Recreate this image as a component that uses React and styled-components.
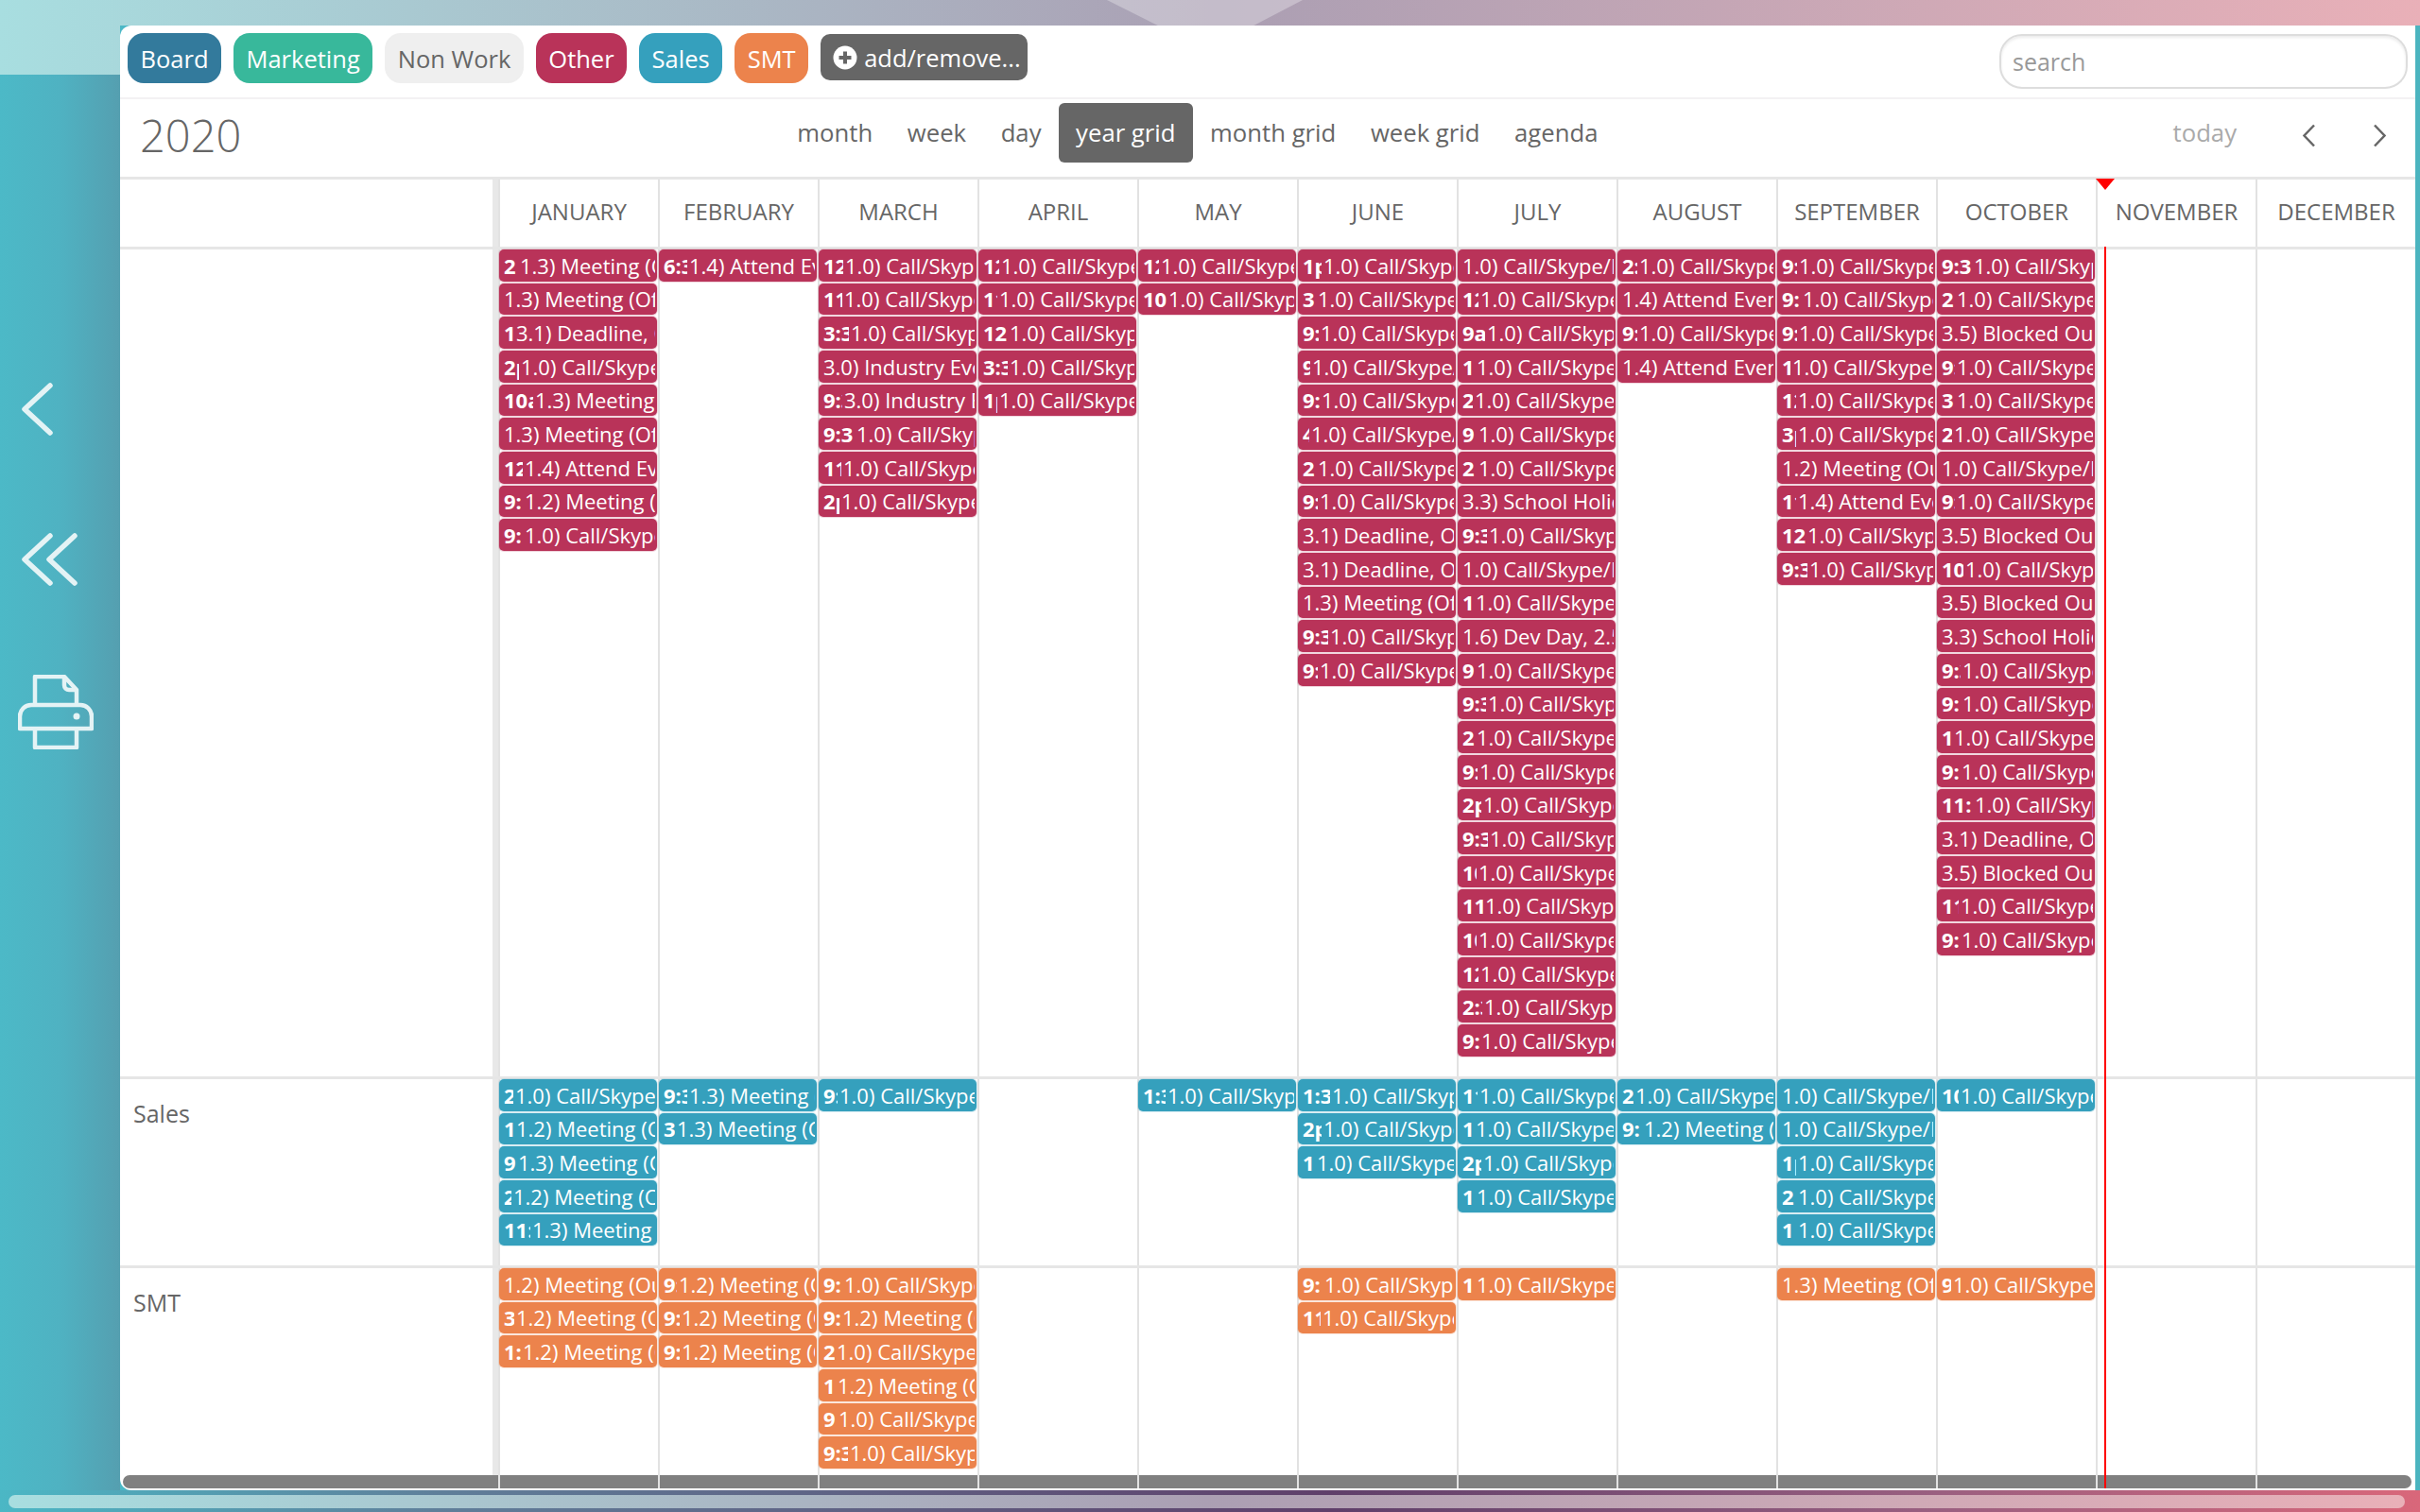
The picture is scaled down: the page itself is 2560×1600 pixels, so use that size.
import React from "react";
import styled, { createGlobalStyle } from "styled-components";

const C = "1.0) Call/Skype/Internal";
const M2 = "1.2) Meeting (Outside)";
const M3 = "1.3) Meeting (Office)";
const A = "1.4) Attend Event";
const D = "3.1) Deadline, Other";
const I = "3.0) Industry Event";
const B = "3.5) Blocked Out";
const S = "3.3) School Holiday";
const V = "1.6) Dev Day, 2.5";

const MONTHS = [
  "January", "February", "March", "April", "May", "June", "July",
  "August", "September", "October", "November", "December",
];

const PILLS = [
  ["Board", "#337a9c", "#fff"],
  ["Marketing", "#38b89b", "#fff"],
  ["Non Work", "#efefef", "#666"],
  ["Other", "#b93359", "#fff"],
  ["Sales", "#35a0bd", "#fff"],
  ["SMT", "#ec834c", "#fff"],
];

const TABS = ["month", "week", "day", "year grid", "month grid", "week grid", "agenda"];

// each event: [time as it shows once clipped, clip width, title]
const OTHER = [
  [
    ["2", 17, M3], ["", 0, M3], ["11", 13, D], ["2pm", 18, C], ["10am", 33, M3],
    ["", 0, M3], ["12:00", 22, A], ["9:", 22, M2], ["9:", 22, C],
  ],
  [["6:30", 27, A]],
  [
    ["12:00", 23, C], ["11:", 22, C], ["3:30", 29, C], ["", 0, I], ["9:30", 22, I],
    ["9:3", 35, C], ["11", 21, C], ["2pm", 19, C],
  ],
  [["12:00", 19, C], ["11:", 17, C], ["12", 28, C], ["3:30", 28, C], ["1pm", 17, C]],
  [["12:00", 19, C], ["10", 27, C]],
  [
    ["1pm", 22, C], ["3", 16, C], ["9:30", 19, C], ["9", 10, C], ["9:", 20, C], ["4", 9, C],
    ["2", 16, C], ["9:30", 18, C], ["", 0, D], ["", 0, D], ["", 0, M3], ["9:30", 29, C], ["9:30", 18, C],
  ],
  [
    ["", 0, C], ["12:00", 19, C], ["9a", 26, C], ["1", 15, C], ["2pm", 13, C], ["9", 17, C],
    ["2", 17, C], ["", 0, S], ["9:30", 28, C], ["", 0, C], ["11", 14, C], ["", 0, V],
    ["9", 15, C], ["9:30", 27, C], ["2", 15, C], ["9:", 18, C], ["2pm", 22, C], ["9:3", 29, C],
    ["10:", 17, C], ["11", 24, C], ["10:", 17, C], ["12:00", 19, C], ["2:30", 23, C], ["9:", 20, C],
  ],
  [["2:", 18, C], ["", 0, A], ["9:30", 18, C], ["", 0, A]],
  [
    ["9:30", 18, C], ["9:", 22, C], ["9:30", 18, C], ["1", 11, C], ["12:00", 17, C],
    ["3pm", 17, C], ["", 0, M2], ["11:", 17, A], ["12", 27, C], ["9:30", 29, C],
  ],
  [
    ["9:3", 34, C], ["2", 16, C], ["", 0, B], ["9:30", 16, C], ["3", 16, C], ["2", 13, C], ["", 0, C],
    ["9:30", 16, C], ["", 0, B], ["10", 25, C], ["", 0, B], ["", 0, S], ["9:30", 22, C], ["9:", 22, C],
    ["1", 13, C], ["9:", 21, C], ["11:", 35, C], ["", 0, D], ["", 0, B], ["11:", 20, C], ["9:", 21, C],
  ],
  [],
  [],
];

const SALES = [
  [["2pm", 12, C], ["10:", 13, M2], ["9:30", 15, M3], ["2", 10, M2], ["11:", 30, M3]],
  [["9:30", 27, M3], ["3pm", 14, M3]],
  [["9:30", 17, C]],
  [],
  [["1:30", 26, C]],
  [["1:3", 31, C], ["2pm", 22, C], ["1", 15, C]],
  [["11", 18, C], ["1", 14, C], ["2pm", 22, C], ["1", 15, C]],
  [["2", 14, C], ["9:", 23, M2]],
  [["", 0, C], ["", 0, C], ["1pm", 17, C], ["2", 17, C], ["1", 17, C]],
  [["10:", 20, C]],
  [],
  [],
];

const SMT = [
  [["", 0, M2], ["3", 13, M2], ["1:", 20, M2]],
  [["9:30", 16, M2], ["9:", 19, M2], ["9:", 19, M2]],
  [["9:", 22, C], ["9:", 20, M2], ["2", 14, C], ["1", 15, M2], ["9", 16, C], ["9:30", 28, C]],
  [],
  [],
  [["9:", 23, C], ["11:", 21, C]],
  [["11:", 15, C]],
  [],
  [["", 0, M3]],
  [["9:30", 12, C]],
  [],
  [],
];

const ROWS = [
  { name: "", height: 878, color: "#b93359", days: OTHER },
  { name: "Sales", height: 200, color: "#35a0bd", days: SALES },
  { name: "SMT", height: 236, color: "#ec834c", days: SMT },
];

const App = () => {
  return (
    <Page>
      <GlobalStyle />
      <TopBar>
        <TopShine />
      </TopBar>
      <Main>
        <Rail>
          <RailCap />
          <RailIcons>
            <RailButton>
              <svg width="34" height="56" viewBox="0 0 34 56" fill="none" stroke="#e4f3f5" strokeWidth="5.5" strokeLinecap="round" strokeLinejoin="round">
                <path d="M30 3 3 28l27 25" />
              </svg>
            </RailButton>
            <RailButton>
              <svg width="60" height="56" viewBox="0 0 60 56" fill="none" stroke="#e4f3f5" strokeWidth="5.5" strokeLinecap="round" strokeLinejoin="round">
                <path d="M30 3 3 28l27 25" />
                <path d="M56 3 29 28l27 25" />
              </svg>
            </RailButton>
            <RailButton $shift={-4} $drop={3}>
              <svg width="80" height="79" viewBox="0 0 80 79" fill="none" stroke="#e4f3f5" strokeWidth="4.5" strokeLinejoin="round">
                <path d="M18 30V2h31l13 14v14" />
                <path d="M49 2v9a5 5 0 0 0 5 5h8" />
                <path d="M2 57V44a12 12 0 0 1 12-12h52a12 12 0 0 1 12 12v13z" />
                <path d="M18 57v20h44V57" />
                <circle cx="62" cy="44" r="3.5" fill="#e4f3f5" stroke="none" />
              </svg>
            </RailButton>
          </RailIcons>
        </Rail>
        <Panel>
          <Toolbar>
            {PILLS.map(([label, bg, fg]) => (
              <Pill key={label} $bg={bg} $fg={fg}>{label}</Pill>
            ))}
            <AddButton>
              <svg width="26" height="26" viewBox="0 0 26 26">
                <circle cx="13" cy="13" r="12.5" fill="#fff" />
                <path d="M13 6.5v13M6.5 13h13" stroke="#666" strokeWidth="4" />
              </svg>
              add/remove...
            </AddButton>
            <Search placeholder="search" />
          </Toolbar>
          <NavBar>
            <Title>2020</Title>
            <Tabs>
              {TABS.map((tab) => (
                <Tab key={tab} $active={tab === "year grid"}>{tab}</Tab>
              ))}
            </Tabs>
            <NavRight>
              <Today>today</Today>
              <Arrow width="15" height="25" viewBox="0 0 15 25">
                <path d="M13 1.5 2.5 12.5 13 23.5" />
              </Arrow>
              <Arrow width="15" height="25" viewBox="0 0 15 25">
                <path d="M2 1.5 12.5 12.5 2 23.5" />
              </Arrow>
            </NavRight>
          </NavBar>
          <HeadRow>
            <RowLabel />
            {MONTHS.map((month) => (
              <HeadCell key={month}>{month}</HeadCell>
            ))}
          </HeadRow>
          {ROWS.map((row) => (
            <GridRow key={row.color} $height={row.height}>
              <RowLabel>{row.name}</RowLabel>
              {row.days.map((events, i) => (
                <DayCell key={i}>
                  {events.map(([time, clip, title], j) => (
                    <Event key={j} $color={row.color}>
                      {time && <EventTime $clip={clip}>{time}</EventTime>}
                      <EventTitle>{title}</EventTitle>
                    </Event>
                  ))}
                </DayCell>
              ))}
            </GridRow>
          ))}
          <InnerScroll />
          <NowArrow />
          <NowLine />
        </Panel>
        <RightEdge />
      </Main>
      <PageScroll>
        <PageThumb />
      </PageScroll>
    </Page>
  );
};

const GlobalStyle = createGlobalStyle`
  html, body {
    margin: 0;
    padding: 0;
    background: #4cb8c6;
  }
  body {
    font-family: "Open Sans", "Liberation Sans", sans-serif;
    overflow: hidden;
  }
`;

const Page = styled.div`
  width: 2560px;
  height: 1600px;
  display: flex;
  flex-direction: column;
  overflow: hidden;
`;

const TopBar = styled.div`
  position: relative;
  height: 27px;
  flex: none;
  background: linear-gradient(90deg, #a8dee0 0, #ab9fb3 1300px, #e9b0b8 2560px);
`;

const TopShine = styled.div`
  position: absolute;
  left: 1171px;
  top: 0;
  width: 207px;
  height: 27px;
  background: rgba(255, 255, 255, 0.3);
  clip-path: polygon(0 0, 100% 0, 75% 100%, 26% 100%);
`;

const Main = styled.div`
  display: flex;
  height: 1550px;
  flex: none;
`;

const Rail = styled.div`
  width: 127px;
  flex: none;
  display: flex;
  flex-direction: column;
  background: linear-gradient(90deg, #4cb9c7, #4fb2c2 50%, #559fb0);
`;

const RailCap = styled.div`
  height: 52px;
  background: linear-gradient(90deg, #a8dee0 0, #ab9fb3 1300px, #e9b0b8 2560px);
  background-size: 2560px 100%;
`;

const RailIcons = styled.div`
  display: flex;
  flex-direction: column;
  padding-top: 274px;
`;

const RailButton = styled.div`
  height: 159px;
  display: flex;
  align-items: center;
  padding-left: ${(p) => 23 + (p.$shift || 0)}px;
  padding-top: ${(p) => p.$drop || 0}px;
`;

const Panel = styled.div`
  position: relative;
  flex: 1;
  height: 1550px;
  background: #fff;
  border-radius: 12px 0 0 12px;
  overflow: hidden;
`;

const RightEdge = styled.div`
  width: 5px;
  flex: none;
  background: #4bb4bf;
`;

const Toolbar = styled.div`
  height: 78px;
  box-sizing: border-box;
  border-bottom: 2px solid #f3f1f3;
  display: flex;
  align-items: flex-start;
  gap: 13px;
  padding: 8px 8px 0;
`;

const Pill = styled.div`
  height: 53px;
  box-sizing: border-box;
  display: flex;
  align-items: center;
  padding: 0 12.5px;
  border-radius: 17px;
  border: 1px solid ${(p) => p.$bg}cc;
  background: ${(p) => p.$bg};
  color: ${(p) => p.$fg};
  font-size: 25.5px;
`;

const AddButton = styled.div`
  height: 49px;
  margin-top: 1px;
  box-sizing: border-box;
  display: flex;
  align-items: center;
  gap: 7px;
  padding: 0 7px 0 13px;
  border-radius: 10px;
  background: #666;
  color: #fff;
  font-size: 25.5px;
`;

const Search = styled.input`
  margin-left: auto;
  width: 432px;
  height: 58px;
  margin-top: 1px;
  box-sizing: border-box;
  padding: 0 12px;
  border: 2px solid #ddd;
  border-radius: 24px;
  box-shadow: inset 0 2px 3px rgba(0, 0, 0, 0.08);
  outline: none;
  font-family: "Open Sans", sans-serif;
  font-size: 25px;
  color: #666;

  &::placeholder {
    color: #999;
    opacity: 1;
  }
`;

const NavBar = styled.div`
  height: 82px;
  display: flex;
  align-items: flex-start;
`;

const Title = styled.div`
  width: 698px;
  box-sizing: border-box;
  padding: 6px 0 0 21px;
  font-size: 47px;
  font-weight: 300;
  line-height: 64px;
  color: #666;
`;

const Tabs = styled.div`
  display: flex;
  margin-top: 4px;
`;

const Tab = styled.div`
  height: 63px;
  display: flex;
  align-items: center;
  padding: 0 18.3px;
  border-radius: 6px;
  font-size: 25.7px;
  color: ${(p) => (p.$active ? "#fff" : "#666")};
  background: ${(p) => (p.$active ? "#666" : "transparent")};
`;

const NavRight = styled.div`
  margin-left: auto;
  display: flex;
  align-items: center;
  height: 63px;
  margin-top: 4px;
  padding-right: 30px;
`;

const Today = styled.div`
  font-size: 25.7px;
  color: #aaa;
  margin-right: 69px;
`;

const Arrow = styled.svg`
  fill: none;
  stroke: #666;
  stroke-width: 2.5;
  margin-top: 6px;

  & + & {
    margin-left: 60px;
  }
`;

const HeadRow = styled.div`
  height: 71px;
  display: flex;
  border-top: 3px solid #e6e6e6;
`;

const RowLabel = styled.div`
  width: 400px;
  flex: none;
  box-sizing: border-box;
  border-right: 6px solid #e8e8e8;
  padding: 19px 0 0 14px;
  font-size: 25px;
  line-height: 34px;
  color: #666;
`;

const HeadCell = styled.div`
  width: 169px;
  flex: none;
  box-sizing: border-box;
  border-left: 2px solid #e2e2e2;
  padding-bottom: 5px;
  display: flex;
  align-items: center;
  justify-content: center;
  text-transform: uppercase;
  font-size: 24px;
  color: #666;
`;

const GridRow = styled.div`
  height: ${(p) => p.$height}px;
  box-sizing: border-box;
  display: flex;
  border-top: 3px solid #e6e6e6;
`;

const DayCell = styled.div`
  position: relative;
  z-index: 1;
  width: 169px;
  flex: none;
  box-sizing: border-box;
  border-left: 2px solid #e2e2e2;
  display: flex;
  flex-direction: column;
  gap: 2px;
`;

const Event = styled.div`
  height: 33.67px;
  margin: 0 1px 0 -1px;
  padding: 0 2px 0 5px;
  flex: none;
  display: flex;
  align-items: center;
  overflow: hidden;
  border-radius: 5px;
  background: ${(p) => p.$color};
  box-shadow: 0 0 0 1px ${(p) => p.$color}33;
  color: #fff;
  font-size: 22px;
  white-space: nowrap;
`;

const EventTime = styled.span`
  width: ${(p) => p.$clip - 2}px;
  margin-right: 2px;
  flex: none;
  overflow: hidden;
  font-weight: 700;
`;

const EventTitle = styled.span`
  flex: 1;
  min-width: 0;
  overflow: hidden;
`;

const InnerScroll = styled.div`
  position: absolute;
  left: 3px;
  right: 4px;
  bottom: 2px;
  height: 14px;
  border-radius: 7px;
  background: #808080;
`;

const NowArrow = styled.div`
  position: absolute;
  z-index: 2;
  left: 2090px;
  top: 162px;
  border-left: 10px solid transparent;
  border-right: 10px solid transparent;
  border-top: 12px solid #f00;
`;

const NowLine = styled.div`
  position: absolute;
  z-index: 2;
  left: 2099px;
  top: 234px;
  bottom: 2px;
  width: 2px;
  background: #f00;
`;

const PageScroll = styled.div`
  flex: 1;
  padding: 5px 16px 4px 9px;
  background: linear-gradient(90deg, #4bb7c5 0, #5f7f9a 18%, #5f3f6a 55%, #9a5f80 80%, #d9677a 100%);
`;

const PageThumb = styled.div`
  height: 14px;
  border-radius: 7px;
  background: linear-gradient(90deg, #a8dee0 0, #ab9fb3 50%, #e9b0b8 100%);
`;

export default App;
